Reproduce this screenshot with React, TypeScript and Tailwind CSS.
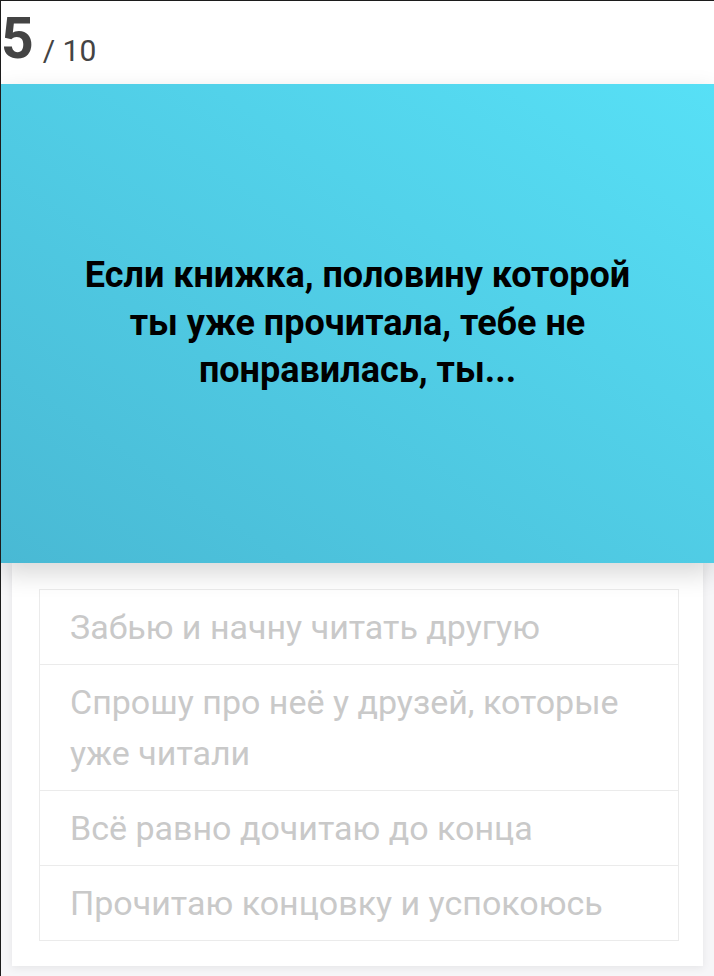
import React from "react";

const options = [
  "Забью и начну читать другую",
  "Спрошу про неё у друзей, которые уже читали",
  "Всё равно дочитаю до конца",
  "Прочитаю концовку и успокоюсь",
];

export default function App() {
  return (
    <div
      className="w-[714px] h-[976px] overflow-hidden bg-white border-t border-l border-[#1c1c1c] flex flex-col"
      style={{ fontFamily: "Roboto, 'Noto Sans', sans-serif" }}
    >
      <div className="h-[83px] shrink-0 flex items-end pb-[17px] text-[#444444]">
        <span className="text-[57px] leading-none font-bold tracking-[-1px]">5</span>
        <span className="text-[30px] leading-none ml-[10px] mb-[1px]">/ 10</span>
      </div>
      <div className="relative z-10 h-[479px] shrink-0 bg-gradient-to-tr from-[#49b9d4] to-[#57e0f6] shadow-[0_10px_24px_rgba(0,0,0,0.16)] flex items-center justify-center px-[40px]">
        <p className="text-center text-[36px] leading-[47.5px] font-bold text-black">
          Если книжка, половину которой
          <br />
          ты уже прочитала, тебе не
          <br />
          понравилась, ты...
        </p>
      </div>
      <div className="px-[11px] pb-[8px] bg-[#f6f6f8] flex-1 flex flex-col">
        <div className="bg-white shadow-[0_2px_8px_rgba(0,0,0,0.07)] pl-[27px] pr-[24px] pt-[26px] pb-[25px]">
          <div className="border border-[#ebebeb] flex flex-col">
            {options.map((o, i) => (
              <div
                key={i}
                className={`px-[30px] py-[11.5px] text-[34px] leading-[51px] text-[#c9c9c9] ${i > 0 ? "border-t border-[#ebebeb]" : ""}`}
              >
                {o}
              </div>
            ))}
          </div>
        </div>
      </div>
    </div>
  );
}
